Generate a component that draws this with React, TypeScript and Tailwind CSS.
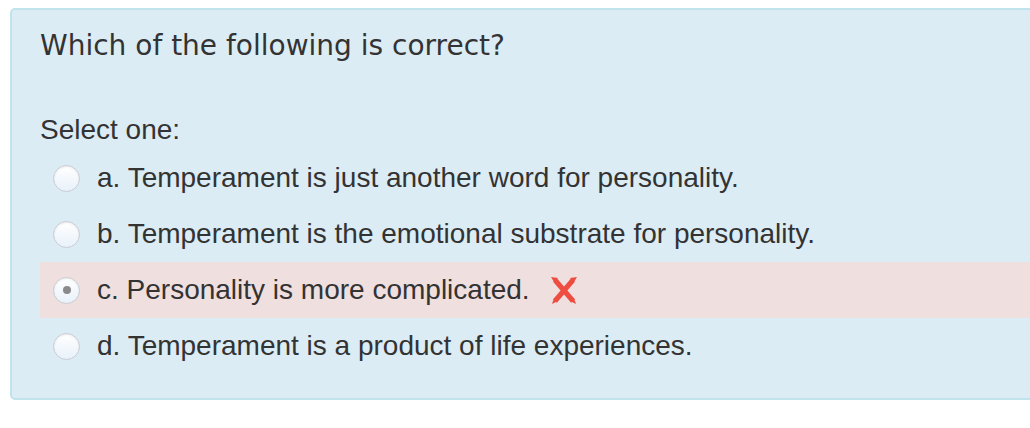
const answers = [
  { key: "a", text: "a. Temperament is just another word for personality." },
  { key: "b", text: "b. Temperament is the emotional substrate for personality." },
  { key: "c", text: "c. Personality is more complicated.", chosen: true },
  { key: "d", text: "d. Temperament is a product of life experiences." },
];

function Radio({ checked }: { checked?: boolean }) {
  return (
    <div className="w-[27px] h-[27px] shrink-0 rounded-full border border-[#c9cdd2] bg-gradient-to-b from-[#ffffff] to-[#e9f1fa] shadow-[inset_0_1px_2px_rgba(0,0,0,0.08)] flex items-center justify-center">
      {checked && <div className="w-[8px] h-[8px] rounded-full bg-[#8a8a8a]" />}
    </div>
  );
}

function Cross() {
  return (
    <svg width="28" height="30" viewBox="0 0 28 30" className="shrink-0">
      <g stroke="#ee4d42" strokeWidth="5" strokeLinecap="butt">
        <line x1="5" y1="5" x2="23" y2="26" />
        <line x1="23" y1="5" x2="5" y2="26" />
      </g>
      <path d="M1 2 L8 3 L4 7 Z M27 2 L20 3 L24 7 Z M2 29 L4 23 L8 26 Z M26 29 L24 23 L20 26 Z" fill="#ee4d42" />
    </svg>
  );
}

export default function App() {
  return (
    <div className="w-[1030px] h-[428px] overflow-hidden bg-white pt-[8px] pl-[10px]">
      <div className="w-[1060px] rounded-[5px] border-2 border-[#c0e3ec] bg-[#dcecf5] pl-[28px] pt-[18px] pb-[24px]">
        <h1 className="text-[28px] leading-[36px] text-[#333] font-['DejaVu_Sans',sans-serif]">
          Which of the following is correct?
        </h1>

        <p className="mt-[48px] text-[28px] leading-[36px] text-[#333] font-['Liberation_Sans',Arial,sans-serif]">
          Select one:
        </p>

        <div className="mt-[2px] flex flex-col font-['Liberation_Sans',Arial,sans-serif]">
          {answers.map((a) => (
            <div
              key={a.key}
              className={`h-[56px] flex items-center pl-[13px] ${a.chosen ? "bg-[#efdfdf]" : ""}`}
            >
              <Radio checked={a.chosen} />
              <span className="ml-[17px] text-[28px] text-[#333]">{a.text}</span>
              {a.chosen && (
                <span className="ml-[20px] flex items-center">
                  <Cross />
                </span>
              )}
            </div>
          ))}
        </div>
      </div>
    </div>
  );
}
